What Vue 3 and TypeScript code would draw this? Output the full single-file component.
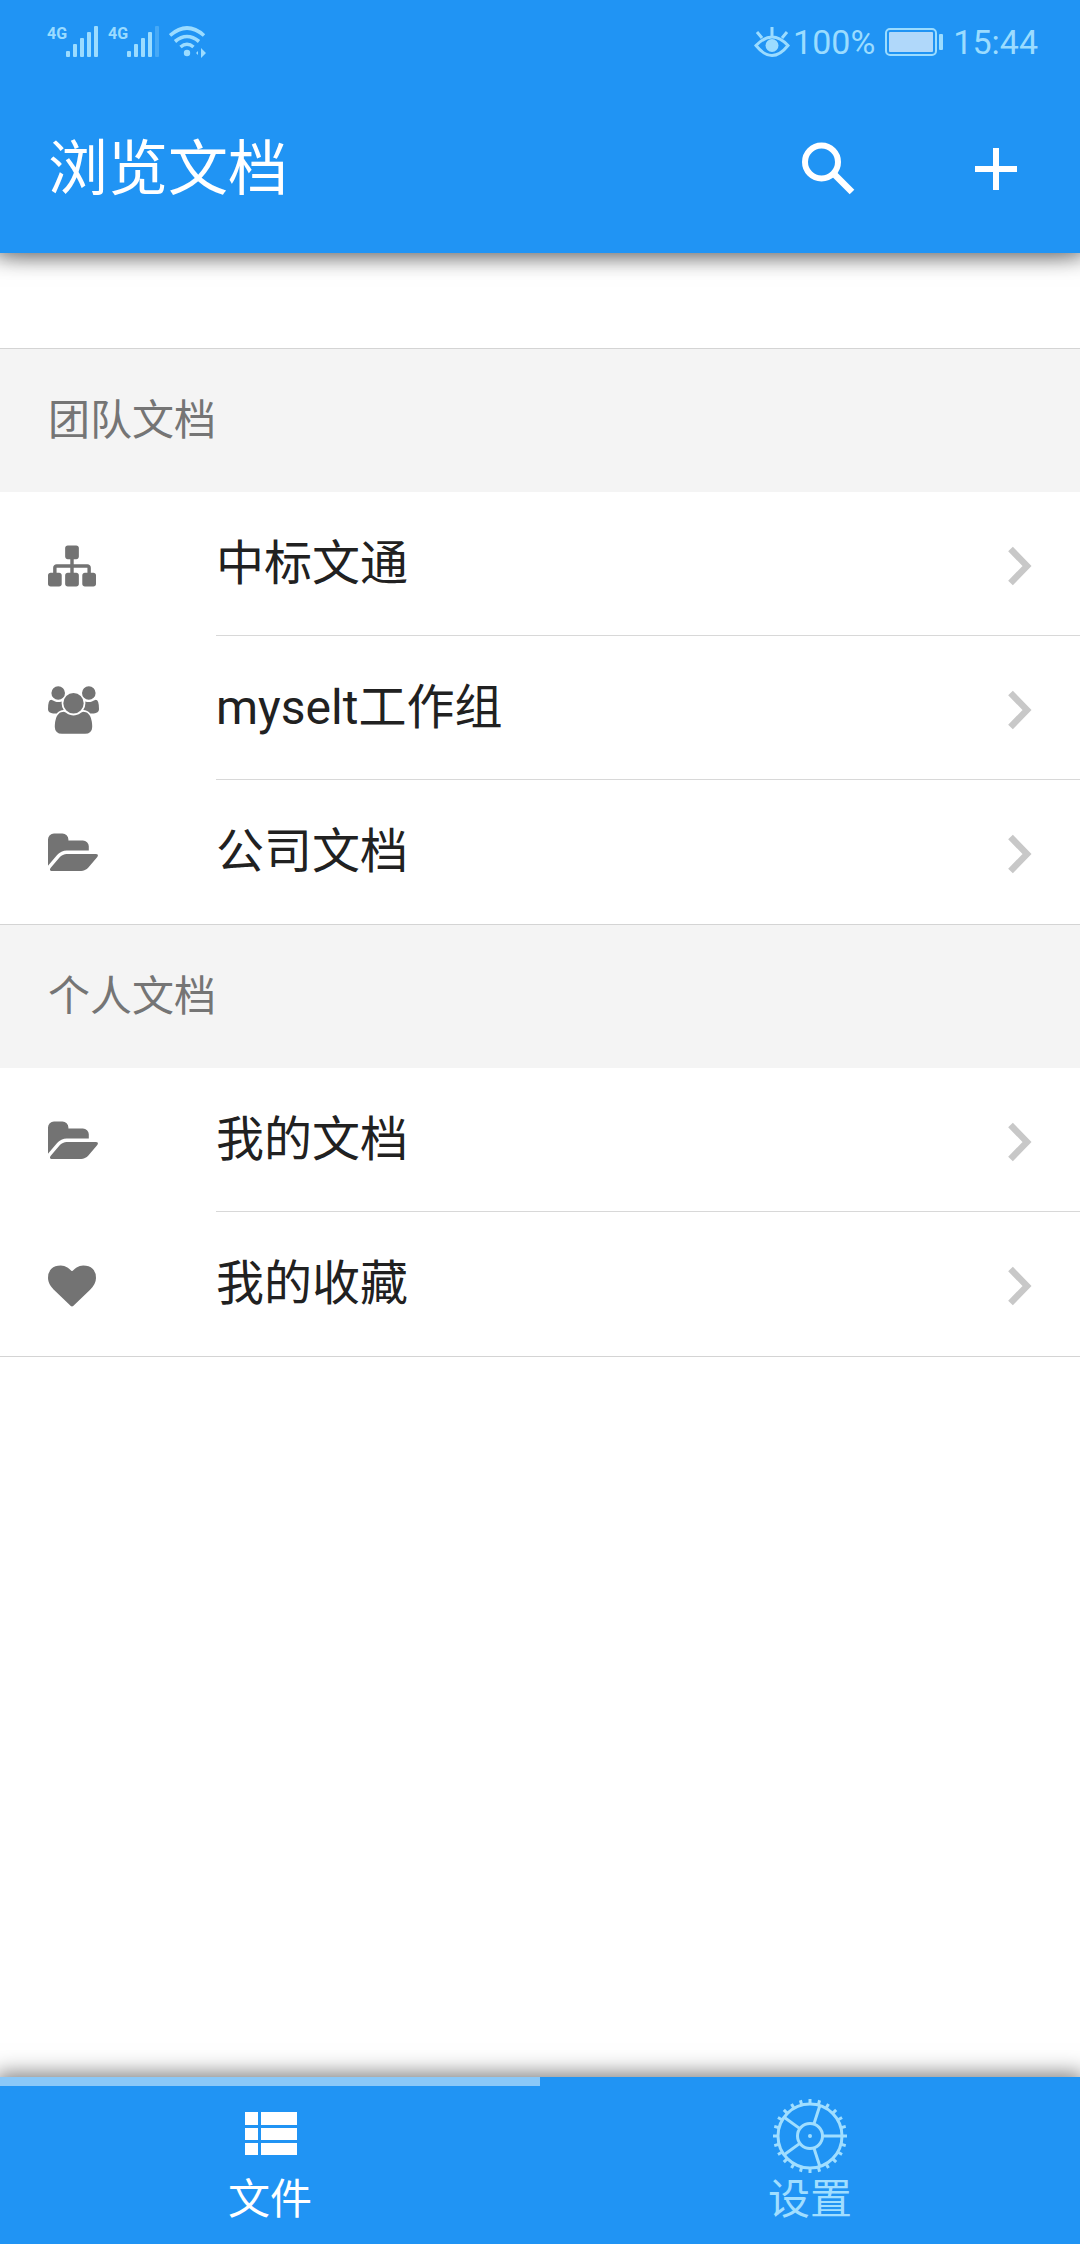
<script setup lang="ts">
import { ref } from 'vue'

interface Row {
  label: string
  icon: keyof typeof icons
}

interface Group {
  title: string
  rows: Row[]
}

const icons = {
  sitemap: {
    width: 48,
    box: '0 0 1792 1792',
    path: 'M1792 1248v320q0 40-28 68t-68 28h-320q-40 0-68-28t-28-68v-320q0-40 28-68t68-28h96v-192h-512v192h96q40 0 68 28t28 68v320q0 40-28 68t-68 28h-320q-40 0-68-28t-28-68v-320q0-40 28-68t68-28h96v-192h-512v192h96q40 0 68 28t28 68v320q0 40-28 68t-68 28h-320q-40 0-68-28t-28-68v-320q0-40 28-68t68-28h96v-192q0-52 38-90t90-38h512v-192h-96q-40 0-68-28t-28-68v-320q0-40 28-68t68-28h320q40 0 68 28t28 68v320q0 40-28 68t-68 28h-96v192h512q52 0 90 38t38 90v192h96q40 0 68 28t28 68z',
  },
  users: {
    width: 51,
    box: '0 0 1920 1792',
    path: 'M593 896q-162 5-265 128h-134q-82 0-138-40.5t-56-118.5q0-353 124-353 6 0 43.5 21t97.5 42.5 119 21.5q67 0 133-23-5 37-5 66 0 139 81 256zm1071 637q0 120-73 189.5t-194 69.5h-874q-121 0-194-69.5t-73-189.5q0-53 3.5-103.5t14-109 26.5-108.5 43-97.5 62-81 85.5-53.5 111.5-20q10 0 43 21.5t73 48 107 48 135 21.5 135-21.5 107-48 73-48 43-21.5q61 0 111.5 20t85.5 53.5 62 81 43 97.5 26.5 108.5 14 109 3.5 103.5zm-1024-1277q0 106-75 181t-181 75-181-75-75-181 75-181 181-75 181 75 75 181zm704 384q0 159-112.5 271.5t-271.5 112.5-271.5-112.5-112.5-271.5 112.5-271.5 271.5-112.5 271.5 112.5 112.5 271.5zm576 225q0 78-56 118.5t-138 40.5h-134q-103-123-265-128 81-117 81-256 0-29-5-66 66 23 133 23 59 0 119-21.5t97.5-42.5 43.5-21q124 0 124 353zm-128-609q0 106-75 181t-181 75-181-75-75-181 75-181 181-75 181 75 75 181z',
  },
  folder: {
    width: 51,
    box: '0 0 1920 1792',
    path: 'M1879 952q0 31-31 66l-336 396q-43 51-120.5 86.5t-143.5 35.5h-1088q-34 0-60.5-13t-26.5-43q0-31 31-66l336-396q43-51 120.5-86.5t143.5-35.5h1088q34 0 60.5 13t26.5 43zm-343-344v160h-832q-94 0-197 47.5t-164 119.5l-337 396-5 6q0-4-.5-12.5t-.5-12.5v-960q0-92 66-158t158-66h320q92 0 158 66t66 158v32h544q92 0 158 66t66 158z',
  },
  heart: {
    width: 48,
    box: '0 0 1792 1792',
    path: 'M896 1664q-26 0-44-18l-624-602q-10-8-27.5-26t-55.5-65.5-68-97.5-53.5-121-23.5-138q0-220 127-344t351-124q62 0 126.5 21.5t120 58 95.5 68.5 76 68q36-36 76-68t95.5-68.5 120-58 126.5-21.5q224 0 351 124t127 344q0 221-229 450l-623 600q-18 18-44 18z',
  },
}

const groups: Group[] = [
  {
    title: '团队文档',
    rows: [
      { label: '中标文通', icon: 'sitemap' },
      { label: 'myselt工作组', icon: 'users' },
      { label: '公司文档', icon: 'folder' },
    ],
  },
  {
    title: '个人文档',
    rows: [
      { label: '我的文档', icon: 'folder' },
      { label: '我的收藏', icon: 'heart' },
    ],
  },
]

const activeTab = ref<'files' | 'settings'>('files')

const teeth = Array.from({ length: 24 }, (_, i) => i * 15)
const spokes = [0, 72, 144, 216, 288]
</script>

<template>
  <div class="screen">
    <header class="top">
      <div class="status">
        <div class="status-side">
          <div v-for="sim in 2" :key="sim" class="signal">
            <span class="net">4G</span>
            <svg width="32" height="32" viewBox="0 0 32 32" fill="currentColor">
              <rect x="0" y="25" width="4" height="6" rx="1" />
              <rect x="7" y="18" width="4" height="13" rx="1" />
              <rect x="14" y="12" width="4" height="19" rx="1" />
              <rect x="21" y="6" width="4" height="25" rx="1" />
              <rect x="28" y="0" width="4" height="31" rx="1" :opacity="sim === 2 ? 0.3 : 1" />
            </svg>
          </div>
          <svg width="40" height="32" viewBox="0 0 40 32" fill="none" stroke="currentColor" stroke-width="3.6">
            <path d="M1 9.500Q18 -5.500 35 9.500M6 15.500Q18 5.500 30 15.500M11.500 21Q18 15.500 24.500 21" />
            <circle cx="18" cy="27" r="3.200" fill="currentColor" stroke="none" />
            <path d="M32 22l5 5-5 5zM29 25v4l-2-2z" fill="currentColor" stroke="none" />
          </svg>
        </div>
        <div class="status-side">
          <svg width="36" height="32" viewBox="0 0 36 32" fill="none" stroke="currentColor" stroke-width="3">
            <path d="M2 19.500Q18 2.500 34 19.500Q18 39.500 2 19.500zM18 1v9M3 6l5 6M33 6l-5 6" />
            <circle cx="18" cy="19.500" r="6.500" fill="currentColor" stroke="none" />
          </svg>
          <span class="percent">100%</span>
          <svg class="battery" width="58" height="28" viewBox="0 0 58 28" fill="currentColor">
            <rect x="1" y="1" width="50" height="26" rx="4" fill="none" stroke="currentColor" stroke-width="2" />
            <rect x="4" y="4" width="44" height="20" rx="1" class="charge" />
            <rect x="54" y="6" width="4" height="16" rx="1" />
          </svg>
          <time>15:44</time>
        </div>
      </div>
      <div class="bar">
        <h1>浏览文档</h1>
        <button type="button" aria-label="搜索">
          <svg width="54" height="54" viewBox="0 0 54 54" fill="none" stroke="currentColor">
            <circle cx="20.500" cy="20" r="16.500" stroke-width="6" />
            <path d="M34 33L51 50" stroke-width="6.500" />
          </svg>
        </button>
        <button type="button" aria-label="新建">
          <svg width="54" height="54" viewBox="0 0 54 54" fill="none" stroke="currentColor" stroke-width="6">
            <path d="M27 6v42M6 27h42" />
          </svg>
        </button>
      </div>
    </header>

    <main>
      <section v-for="group in groups" :key="group.title">
        <h2>{{ group.title }}</h2>
        <ul>
          <li v-for="row in group.rows" :key="row.label">
            <a href="#">
              <span class="glyph">
                <svg :width="icons[row.icon].width" height="48" :viewBox="icons[row.icon].box" fill="currentColor">
                  <path :d="icons[row.icon].path" />
                </svg>
              </span>
              <span class="body">
                <span class="label">{{ row.label }}</span>
                <svg class="chevron" width="24" height="40" viewBox="0 0 24 40" fill="none" stroke="currentColor" stroke-width="6.500">
                  <path d="M2.500 3L19 20L2.500 37" />
                </svg>
              </span>
            </a>
          </li>
        </ul>
      </section>
    </main>

    <nav class="tabs">
      <button type="button" :class="{ active: activeTab === 'files' }" @click="activeTab = 'files'">
        <svg width="76" height="76" viewBox="0 0 76 76" fill="currentColor">
          <path d="M13 14h13v13H13zM29 14h36v13H29zM13 30h13v12H13zM29 30h36v12H29zM13 45h13v12H13zM29 45h36v12H29z" />
        </svg>
        <span>文件</span>
      </button>
      <button type="button" :class="{ active: activeTab === 'settings' }" @click="activeTab = 'settings'">
        <svg width="76" height="76" viewBox="-38 -38 76 76" fill="none" stroke="currentColor" stroke-width="3">
          <circle r="32" />
          <circle r="12.500" />
          <circle r="2" fill="currentColor" stroke="none" />
          <path v-for="a in spokes" :key="'s' + a" d="M12.500 0H32" :transform="`rotate(${a})`" />
          <path v-for="a in teeth" :key="'t' + a" d="M32 0H37" :transform="`rotate(${a})`" />
        </svg>
        <span>设置</span>
      </button>
    </nav>
  </div>
</template>

<style>
body {
  background: #fff;
}
</style>

<style scoped>
.screen {
  display: flex;
  flex-direction: column;
  min-height: 100vh;
  overflow: hidden;
  font-family: Roboto, 'Noto Sans CJK SC', sans-serif;
  color: #212121;
}

svg {
  display: block;
  flex: none;
}

button {
  border: 0;
  padding: 0;
  background: none;
  color: inherit;
  font: inherit;
}

.top {
  background: #2094f4;
  color: #fff;
  box-shadow: 0 0 20px 4px rgba(0, 0, 0, 0.5), -20px 0 20px 4px rgba(0, 0, 0, 0.1), 20px 0 20px 4px rgba(0, 0, 0, 0.1);
}

.status {
  display: flex;
  justify-content: space-between;
  height: 84px;
  padding: 0 42px 0 47px;
  color: #9bdcff;
}

.status-side {
  display: flex;
  align-items: center;
}

.signal {
  display: flex;
  margin-right: 10px;
}

.net {
  width: 19px;
  font-size: 16px;
  line-height: 16px;
  font-weight: 700;
}

.percent,
time {
  font-size: 34px;
  line-height: 40px;
}

.percent {
  margin-left: 3px;
}

.battery {
  margin: 0 10px;
}

.charge {
  fill: #b0d8fa;
}

.bar {
  display: flex;
  align-items: center;
  height: 169px;
  padding: 0 48px;
}

h1 {
  flex: 1;
  margin: 0;
  padding-top: 2px;
  font-size: 60px;
  line-height: 84px;
  font-weight: 400;
}

.bar button {
  margin-left: 114px;
}

.bar button:last-child {
  margin-right: 9px;
}

main {
  flex: 1;
  margin-top: 95px;
}

h2 {
  margin: 0;
  padding: 1px 48px 0;
  border-top: 1px solid #d4d4d4;
  background: #f4f4f4;
  color: #757575;
  font-size: 42px;
  line-height: 142px;
  font-weight: 400;
}

ul {
  margin: 0;
  padding: 0;
  list-style: none;
}

section:last-child ul {
  border-bottom: 1px solid #d4d4d4;
}

a {
  display: flex;
  align-items: center;
  height: 144px;
  color: inherit;
  text-decoration: none;
}

.glyph {
  width: 168px;
  padding: 3px 0 0 48px;
  color: #737373;
}

.body {
  display: flex;
  flex: 1;
  align-items: center;
  justify-content: space-between;
  height: 100%;
  box-sizing: border-box;
  padding-right: 48px;
  border-bottom: 1px solid #d8d8d8;
}

li:last-child .body {
  border-bottom-color: transparent;
}

.label {
  font-size: 48px;
  line-height: 72px;
}

.chevron {
  margin-top: 4px;
  color: #c8c8c8;
}

.tabs {
  display: flex;
  background: #2094f4;
  color: #fff;
  box-shadow: 0 0 20px 4px rgba(0, 0, 0, 0.5);
}

.tabs button {
  display: flex;
  flex: 1;
  flex-direction: column;
  align-items: center;
  height: 167px;
  padding-top: 12px;
  border-top: 9px solid transparent;
  color: #a0deff;
  font-size: 42px;
  line-height: 52px;
}

.tabs button.active {
  border-top-color: #8ac8f8;
  color: #fff;
}
</style>
